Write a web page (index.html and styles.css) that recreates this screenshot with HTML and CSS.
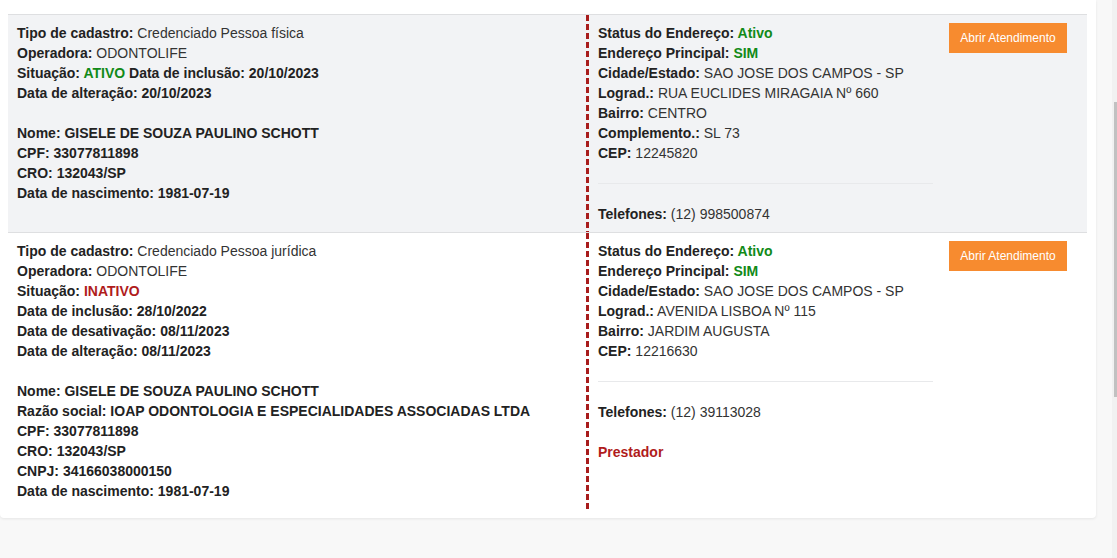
FILE: index.html
```html
<!DOCTYPE html>
<html lang="pt-BR">
<head>
<meta charset="utf-8">
<title>Credenciados</title>
<link rel="stylesheet" href="styles.css">
</head>
<body>
<div class="page">
  <div class="card">
    <div class="row striped">
      <div class="cell info">
        <div class="line"><b>Tipo de cadastro:</b> Credenciado Pessoa física</div>
        <div class="line"><b>Operadora:</b> ODONTOLIFE</div>
        <div class="line"><b>Situação: <span class="ok">ATIVO</span> Data de inclusão: 20/10/2023</b></div>
        <div class="line"><b>Data de alteração: 20/10/2023</b></div>
        <div class="line spaced"><b>Nome: GISELE DE SOUZA PAULINO SCHOTT</b></div>
        <div class="line"><b>CPF: 33077811898</b></div>
        <div class="line"><b>CRO: 132043/SP</b></div>
        <div class="line"><b>Data de nascimento: 1981-07-19</b></div>
      </div>
      <div class="cell addr">
        <div class="line"><b>Status do Endereço: <span class="ok">Ativo</span></b></div>
        <div class="line"><b>Endereço Principal: <span class="ok">SIM</span></b></div>
        <div class="line"><b>Cidade/Estado:</b> SAO JOSE DOS CAMPOS - SP</div>
        <div class="line"><b>Lograd.:</b> RUA EUCLIDES MIRAGAIA Nº 660</div>
        <div class="line"><b>Bairro:</b> CENTRO</div>
        <div class="line"><b>Complemento.:</b> SL 73</div>
        <div class="line"><b>CEP:</b> 12245820</div>
        <hr class="sep">
        <div class="line"><b>Telefones:</b> (12) 998500874</div>
      </div>
      <div class="cell action">
        <button class="btn" type="button">Abrir Atendimento</button>
      </div>
    </div>
    <div class="row">
      <div class="cell info">
        <div class="line"><b>Tipo de cadastro:</b> Credenciado Pessoa jurídica</div>
        <div class="line"><b>Operadora:</b> ODONTOLIFE</div>
        <div class="line"><b>Situação: <span class="bad">INATIVO</span></b></div>
        <div class="line"><b>Data de inclusão: 28/10/2022</b></div>
        <div class="line"><b>Data de desativação: 08/11/2023</b></div>
        <div class="line"><b>Data de alteração: 08/11/2023</b></div>
        <div class="line spaced"><b>Nome: GISELE DE SOUZA PAULINO SCHOTT</b></div>
        <div class="line"><b>Razão social: IOAP ODONTOLOGIA E ESPECIALIDADES ASSOCIADAS LTDA</b></div>
        <div class="line"><b>CPF: 33077811898</b></div>
        <div class="line"><b>CRO: 132043/SP</b></div>
        <div class="line"><b>CNPJ: 34166038000150</b></div>
        <div class="line"><b>Data de nascimento: 1981-07-19</b></div>
      </div>
      <div class="cell addr">
        <div class="line"><b>Status do Endereço: <span class="ok">Ativo</span></b></div>
        <div class="line"><b>Endereço Principal: <span class="ok">SIM</span></b></div>
        <div class="line"><b>Cidade/Estado:</b> SAO JOSE DOS CAMPOS - SP</div>
        <div class="line"><b>Lograd.:</b> AVENIDA LISBOA Nº 115</div>
        <div class="line"><b>Bairro:</b> JARDIM AUGUSTA</div>
        <div class="line"><b>CEP:</b> 12216630</div>
        <hr class="sep">
        <div class="line"><b>Telefones:</b> (12) 39113028</div>
        <div class="line spaced"><b class="bad">Prestador</b></div>
      </div>
      <div class="cell action">
        <button class="btn" type="button">Abrir Atendimento</button>
      </div>
    </div>
  </div>
</div>
<div class="scrollbar"><div class="thumb"></div></div>
</body>
</html>
```

FILE: styles.css
```css
html, body {
  margin: 0;
  padding: 0;
  height: 558px;
  overflow: hidden;
}
body {
  background: #f8f8f8;
  font-family: "Liberation Sans", Arial, sans-serif;
  font-size: 14px;
  line-height: 20px;
  color: #333;
  display: flex;
}
.page {
  flex: 1;
}
.card {
  width: 1079px;
  background: #fff;
  padding: 14px 9px 9px 8px;
  border-radius: 0 0 4px 4px;
  box-shadow: 0 1px 3px rgba(0, 0, 0, 0.08);
}
.row {
  display: grid;
  grid-template-columns: 578px 355px 1fr;
  border-top: 1px solid #dedfe1;
}
.row.striped {
  background: #f2f3f5;
}
.cell {
  padding: 8px;
}
.info {
  padding-left: 9px;
}
.addr {
  padding-left: 12px;
  background-image: repeating-linear-gradient(to bottom, #a81c1c 0 6px, transparent 6px 9px);
  background-size: 3px 100%;
  background-repeat: no-repeat;
  background-position: left top;
}
.line {
  white-space: nowrap;
}
.line b {
  color: #222;
}
.spaced {
  margin-top: 20px;
}
.ok, .line b .ok {
  color: #118a18;
}
.bad, .line b .bad, .line b.bad {
  color: #b01c1c;
}
.sep {
  margin: 20px 0;
  border: 0;
  border-top: 1px solid #e8e9eb;
  height: 0;
}
.action {
  padding: 8px;
}
.btn {
  width: 118px;
  height: 30px;
  background: #f78b2f;
  color: #fff;
  border: 0;
  border-radius: 0;
  font-family: "Liberation Sans", Arial, sans-serif;
  font-size: 12px;
  padding: 0;
  cursor: pointer;
}
.scrollbar {
  width: 5px;
  background: #f1f1f1;
}
.thumb {
  margin-top: 102px;
  margin-left: 2px;
  width: 3px;
  height: 295px;
  background: #c1c1c1;
}
```
